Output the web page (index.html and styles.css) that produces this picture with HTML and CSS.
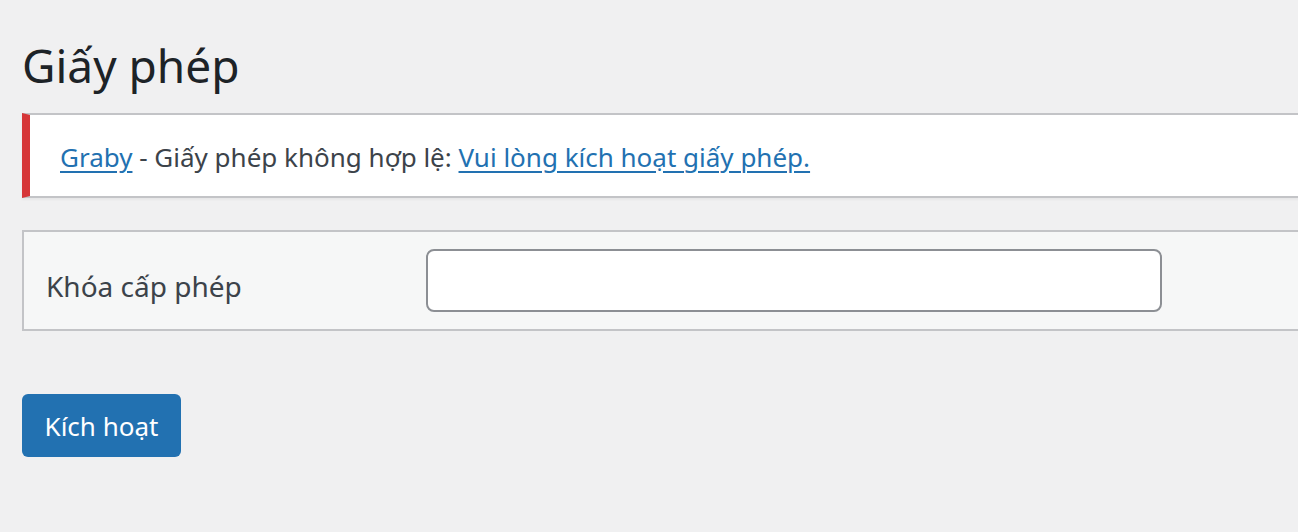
FILE: index.html
```html
<!DOCTYPE html>
<html lang="vi">
<head>
<meta charset="utf-8">
<title>Giấy phép</title>
<link rel="stylesheet" href="styles.css">
</head>
<body>
<div class="wrap">
  <h1 class="title">Giấy phép</h1>
  <div class="notice">
    <p><a href="#">Graby</a> - Giấy phép không hợp lệ: <a href="#">Vui lòng kích hoạt giấy phép.</a></p>
  </div>
  <div class="form-table">
    <label class="label" for="key">Khóa cấp phép</label>
    <input class="input" id="key" type="text">
  </div>
  <div class="actions">
    <button class="button">Kích hoạt</button>
  </div>
</div>
</body>
</html>
```
FILE: styles.css
```css
html, body {
  margin: 0;
  padding: 0;
  background: #f0f0f1;
  font-family: "Noto Sans", "Open Sans", sans-serif;
  overflow: hidden;
}
.wrap {
  padding: 30px 0 0 22px;
  margin-right: -40px;
}
.title {
  margin: 0;
  font-weight: 400;
  font-size: 46px;
  line-height: 70px;
  color: #1d2327;
}
.notice {
  margin-top: 13px;
  background: #fff;
  border: 2px solid #c3c4c7;
  border-left: 8px solid #d63638;
  padding: 0 30px;
  height: 81px;
  display: flex;
  align-items: center;
  box-shadow: 0 2px 2px rgba(0,0,0,0.04);
}
.notice p {
  margin: 0;
  padding-top: 2px;
  font-size: 26px;
  color: #3c434a;
}
.notice a {
  color: #2271b1;
  text-decoration: underline;
  text-underline-offset: 4px;
  text-decoration-thickness: 2px;
}
.form-table {
  margin-top: 32px;
  background: #f6f7f7;
  border: 2px solid #c3c4c7;
  height: 97px;
  display: flex;
  align-items: center;
  padding-left: 22px;
}
.label {
  width: 380px;
  padding-top: 10px;
  font-size: 28px;
  color: #3c434a;
}
.input {
  width: 736px;
  height: 63px;
  box-sizing: border-box;
  border: 2px solid #8c8f94;
  border-radius: 8px;
  background: #fff;
  margin: 0;
}
.actions {
  padding-top: 63px;
}
.button {
  width: 159px;
  height: 63px;
  background: #2271b1;
  color: #fff;
  border: 0;
  border-radius: 6px;
  font-family: inherit;
  font-size: 26px;
  padding: 0;
}
```
